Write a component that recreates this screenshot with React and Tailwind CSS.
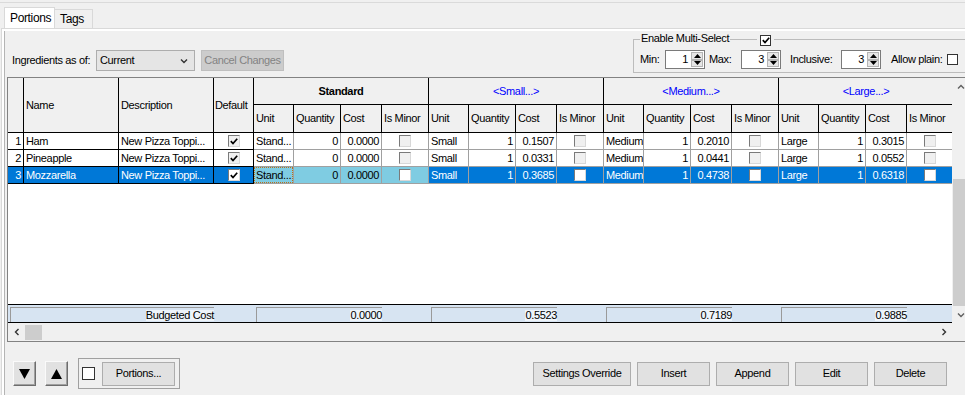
import React from 'react'

const groupCols = [
  { w: 'w-[40px]', label: 'Unit' },
  { w: 'w-[47px]', label: 'Quantity' },
  { w: 'w-[41px]', label: 'Cost' },
  { w: 'w-[47px]', label: 'Is Minor' },
]

const groups = [
  { label: 'Standard', std: true },
  { label: '<Small...>' },
  { label: '<Medium...>' },
  { label: '<Large...>' },
]

const rows = [
  { n: 1, name: 'Ham', vals: [['Stand...', '0', '0.0000'], ['Small', '1', '0.1507'], ['Medium', '1', '0.2010'], ['Large', '1', '0.3015']] },
  { n: 2, name: 'Pineapple', vals: [['Stand...', '0', '0.0000'], ['Small', '1', '0.0331'], ['Medium', '1', '0.0441'], ['Large', '1', '0.0552']] },
  { n: 3, name: 'Mozzarella', sel: true, vals: [['Stand...', '0', '0.0000'], ['Small', '1', '0.3685'], ['Medium', '1', '0.4738'], ['Large', '1', '0.6318']] },
]

const footer = ['0.0000', '0.5523', '0.7189', '0.9885']

function Check({ checked, white }) {
  return (
    <span className={`flex h-[12px] w-[12px] items-center justify-center border border-t-[#7a7a7a] border-l-[#7a7a7a] border-r-[#d8d8d8] border-b-[#d8d8d8] ${white ? 'bg-white' : 'bg-[#f0f0f0]'}`}>
      {checked && (
        <svg width="8" height="7" viewBox="0 0 8 7">
          <path d="M0.8 3.2 L3 5.5 L7.2 0.8" stroke="#000" strokeWidth="1.7" fill="none" />
        </svg>
      )}
    </span>
  )
}

function Chevron({ dir = 'down', color = '#606060' }) {
  const d = {
    down: 'M1 1.5 L4 4.5 L7 1.5',
    up: 'M1 4.5 L4 1.5 L7 4.5',
    left: 'M4.5 1 L1.5 4 L4.5 7',
    right: 'M1.5 1 L4.5 4 L1.5 7',
  }[dir]
  const vert = dir === 'down' || dir === 'up'
  return (
    <svg width={vert ? 8 : 6} height={vert ? 6 : 8} viewBox={vert ? '0 0 8 6' : '0 0 6 8'}>
      <path d={d} stroke={color} strokeWidth="1.4" fill="none" />
    </svg>
  )
}

function Spin({ value }) {
  return (
    <div className="flex h-[19px] w-[40px] border border-[#7a7a7a] bg-white">
      <span className="flex flex-1 items-center justify-end pr-[2px]">{value}</span>
      <div className="flex w-[14px] flex-col p-[1px]">
        <span className="flex flex-1 items-center justify-center border border-[#b4b4b4] bg-[#e6e6e6]">
          <svg width="7" height="4" viewBox="0 0 7 4"><path d="M0 4 L3.5 0 L7 4 Z" fill="#000" /></svg>
        </span>
        <span className="flex flex-1 items-center justify-center border border-[#b4b4b4] bg-[#e6e6e6]">
          <svg width="7" height="4" viewBox="0 0 7 4"><path d="M0 0 L3.5 4 L7 0 Z" fill="#000" /></svg>
        </span>
      </div>
    </div>
  )
}

function Btn({ children, w }) {
  return (
    <button className={`flex h-[24px] ${w} items-center justify-center border border-[#adadad] bg-[#e1e1e1] text-black`}>
      {children}
    </button>
  )
}

export default function App() {
  return (
    <div className="h-[395px] w-[965px] overflow-hidden whitespace-nowrap bg-[#f0f0f0] font-['Liberation_Sans',Arial,sans-serif] text-[11px] leading-none tracking-[-0.35px] text-black">
      <div className="mt-[2px] h-[1px] bg-[#dadada]" />
      {/* Tabs */}
      <div className="flex h-[25px] items-end pl-[4px]">
        <div className="flex h-[21px] w-[51px] items-center border border-b-0 border-[#d9d9d9] bg-white pl-[5px] text-[12px]">Portions</div>
        <div className="flex h-[19px] w-[38px] items-center border border-b-0 border-l-0 border-[#d9d9d9] bg-[#f0f0f0] pl-[5px] text-[12px]">Tags</div>
      </div>

      {/* Tab page */}
      <div className="ml-[1px] h-[367px] border-l border-t border-[#d9d9d9] bg-white pl-[2px] pt-[2px]">
        <div className="h-full border-l border-[#b4b4b4] bg-[#f0f0f0]">
          {/* Controls row */}
          <div className="flex h-[46px] items-start">
            <div className="ml-[7px] mt-[19px] flex h-[21px] flex-none items-center">
              <span className="w-[84px]">Ingredients as of:</span>
              <div className="flex h-[21px] w-[99px] items-center justify-between border border-[#adadad] bg-[#e5e5e5] pl-[3px] pr-[6px]">
                <span>Current</span>
                <Chevron dir="down" color="#333" />
              </div>
              <div className="ml-[6px] flex h-[21px] w-[83px] items-center justify-center border border-[#bfbfbf] bg-[#cccccc] text-[#838383]">
                Cancel Changes
              </div>
            </div>
            <div className="relative ml-[349px] mt-[8px] h-[34px] w-[340px] flex-none border border-[#bcbcbc]">
              <span className="absolute left-[6px] top-[-7px] bg-[#f0f0f0] px-[1px]">Enable Multi-Select</span>
              <span className="absolute left-[123px] top-[-5px] bg-[#f0f0f0] px-[3px]">
                <span className="flex h-[11px] w-[11px] items-center justify-center border border-[#333] bg-white">
                  <svg width="8" height="7" viewBox="0 0 8 7">
                    <path d="M0.8 3.2 L3 5.5 L7.2 0.8" stroke="#000" strokeWidth="1.7" fill="none" />
                  </svg>
                </span>
              </span>
              <div className="flex items-center pl-[6px] pt-[10px]">
                <span className="w-[25px]">Min:</span>
                <Spin value="1" />
                <span className="ml-[4px] w-[32px]">Max:</span>
                <Spin value="3" />
                <span className="ml-[9px] w-[51px]">Inclusive:</span>
                <Spin value="3" />
                <span className="ml-[10px] w-[56px]">Allow plain:</span>
                <span className="h-[11px] w-[11px] border border-[#333] bg-white" />
              </div>
            </div>
          </div>

          {/* Grid */}
          <div className="ml-[2px] w-[970px] border-b border-l border-t border-[#828282] bg-white">
            <div className="flex h-[245px]">
              <div className="flex w-[944px] flex-none flex-col overflow-hidden">
                {/* Header */}
                <div className="flex h-[55px] flex-none bg-[#f0f0f0]">
                  <div className="h-[55px] w-[16px] flex-none border-b border-r border-black" />
                  <div className="flex h-[55px] w-[95px] flex-none items-center border-b border-r border-black pl-[2px]">Name</div>
                  <div className="flex h-[55px] w-[95px] flex-none items-center border-b border-r border-black pl-[2px]">Description</div>
                  <div className="flex h-[55px] w-[40px] flex-none items-center border-b border-r border-black pl-[1px]">Default</div>
                  {groups.map((g) => (
                    <div key={g.label} className="flex w-[175px] flex-none flex-col">
                      <div className={`flex h-[27px] items-center justify-center border-b border-r border-black ${g.std ? 'font-bold' : 'text-[#0000ff]'}`}>
                        {g.label}
                      </div>
                      <div className="flex h-[28px]">
                        {groupCols.map((c) => (
                          <div key={c.label} className={`flex ${c.w} flex-none items-center border-b border-r border-black pl-[2px]`}>
                            {c.label}
                          </div>
                        ))}
                      </div>
                    </div>
                  ))}
                </div>

                {/* Rows */}
                {rows.map((r) => {
                  const sel = r.sel
                  const fixed = sel ? 'bg-[#0078d7] text-white' : 'bg-white'
                  return (
                    <div key={r.n} className="flex h-[17px] flex-none">
                      <div className={`flex w-[16px] flex-none items-center justify-end border-b border-r border-black pr-[2px] ${fixed}`}>{r.n}</div>
                      <div className={`flex w-[95px] flex-none items-center border-b border-r border-black pl-[2px] ${fixed}`}>{r.name}</div>
                      <div className={`flex w-[95px] flex-none items-center overflow-hidden border-b border-r border-black pl-[2px] ${fixed}`}>New Pizza Toppi...</div>
                      <div className={`flex w-[40px] flex-none items-center justify-center border-b border-r border-black ${fixed}`}>
                        <Check checked white={sel} />
                      </div>
                      {r.vals.map((v, gi) => {
                        const bg = sel ? (gi === 0 ? 'bg-[#7fcce2] text-black' : 'bg-[#0078d7] text-white') : 'bg-white'
                        const focus = sel && gi === 0
                        return (
                          <div key={gi} className="flex w-[175px] flex-none">
                            <div className={`flex w-[40px] flex-none overflow-hidden border-b border-r border-[#a0a0a0] ${bg}`}>
                              <div className={`flex flex-1 items-center pl-[1px] ${focus ? 'border border-dotted border-[#b8701c]' : 'border border-transparent'}`}>
                                {v[0]}
                              </div>
                            </div>
                            <div className={`flex w-[47px] flex-none items-center justify-end border-b border-r border-[#a0a0a0] pr-[2px] ${bg}`}>{v[1]}</div>
                            <div className={`flex w-[41px] flex-none items-center justify-end border-b border-r border-[#a0a0a0] pr-[2px] ${bg}`}>{v[2]}</div>
                            <div className={`flex w-[47px] flex-none items-center justify-center border-b border-r border-[#a0a0a0] ${bg}`}>
                              <Check white={sel} />
                            </div>
                          </div>
                        )
                      })}
                    </div>
                  )
                })}

                <div className="flex-1 bg-white" />

                {/* Footer */}
                <div className="flex h-[19px] flex-none border-b border-t border-black bg-[#d7e4f2]">
                  <div className="w-[206px] flex-none pl-[2px] pt-[2px]">
                    <div className="flex h-[15px] w-[204px] items-center justify-end border-l border-t border-[#9a9a9a]">
                      <span className="bg-[#eef4fa]">Budgeted Cost</span>
                    </div>
                  </div>
                  <div className="w-[40px] flex-none" />
                  {footer.map((f) => (
                    <div key={f} className="w-[175px] flex-none pl-[2px] pt-[2px]">
                      <div className="flex h-[15px] w-[126px] items-center justify-end border-l border-t border-[#9a9a9a]">
                        <span className="bg-[#eef4fa]">{f}</span>
                      </div>
                    </div>
                  ))}
                </div>
              </div>

              {/* Vertical scrollbar */}
              <div className="flex w-[17px] flex-none flex-col bg-[#f0f0f0]">
                <div className="flex h-[17px] items-center justify-center"><Chevron dir="up" /></div>
                <div className="flex flex-1 flex-col">
                  <div className="h-[84px]" />
                  <div className="ml-[1px] w-[15px] flex-1 bg-[#cdcdcd]" />
                </div>
                <div className="flex h-[17px] items-center justify-center"><Chevron dir="down" /></div>
              </div>
            </div>

            {/* Horizontal scrollbar */}
            <div className="flex h-[18px] bg-[#f0f0f0]">
              <div className="flex w-[944px] flex-none items-center">
                <div className="flex h-[18px] w-[17px] items-center justify-center"><Chevron dir="left" color="#333" /></div>
                <div className="h-[15px] w-[17px] bg-[#cdcdcd]" />
                <div className="flex-1" />
                <div className="flex h-[18px] w-[17px] items-center justify-center"><Chevron dir="right" color="#333" /></div>
              </div>
              <div className="w-[17px] flex-none" />
            </div>
          </div>

          {/* Bottom buttons */}
          <div className="mt-[16px] flex h-[31px] items-center">
            <button className="ml-[8px] flex h-[25px] w-[23px] items-center justify-center border border-b-[#6d6d6d] border-l-[#fafafa] border-r-[#6d6d6d] border-t-[#fafafa] bg-[#e1e1e1] shadow-[inset_-1px_-1px_0_#a0a0a0]">
              <svg width="11" height="10" viewBox="0 0 11 10"><path d="M0 0 L11 0 L5.5 10 Z" fill="#000" /></svg>
            </button>
            <button className="ml-[9px] flex h-[25px] w-[23px] items-center justify-center border border-b-[#6d6d6d] border-l-[#fafafa] border-r-[#6d6d6d] border-t-[#fafafa] bg-[#e1e1e1] shadow-[inset_-1px_-1px_0_#a0a0a0]">
              <svg width="11" height="10" viewBox="0 0 11 10"><path d="M0 10 L11 10 L5.5 0 Z" fill="#000" /></svg>
            </button>
            <div className="ml-[10px] flex h-[31px] w-[102px] items-center border border-[#a0a0a0] pl-[3px]">
              <span className="h-[13px] w-[13px] border border-[#333] bg-white" />
              <div className="ml-[7px]">
                <Btn w="w-[73px]">Portions...</Btn>
              </div>
            </div>
            <div className="ml-[353px] flex gap-[6px]">
              <Btn w="w-[98px]">Settings Override</Btn>
              <Btn w="w-[73px]">Insert</Btn>
              <Btn w="w-[73px]">Append</Btn>
              <Btn w="w-[73px]">Edit</Btn>
              <Btn w="w-[73px]">Delete</Btn>
            </div>
          </div>
        </div>
      </div>
    </div>
  )
}
